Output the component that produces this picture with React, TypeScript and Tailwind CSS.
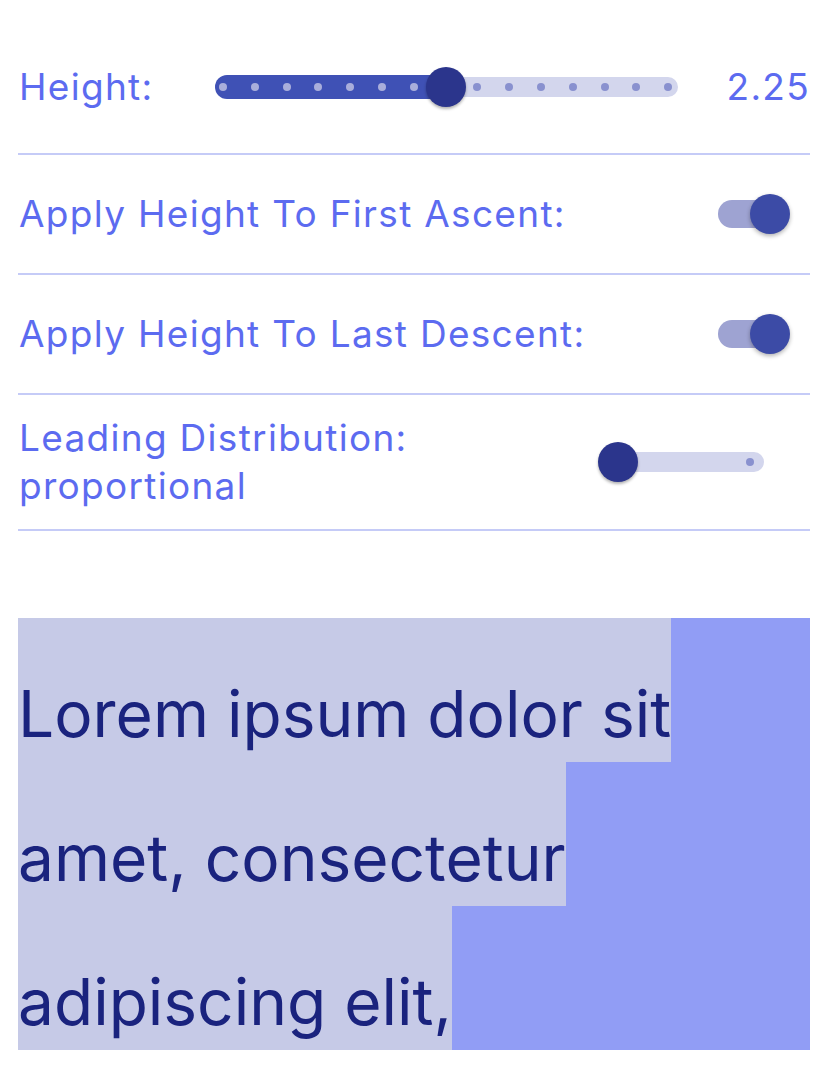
import React from "react";

const font = { fontFamily: "Inter, 'Liberation Sans', sans-serif" };

function DotSlider() {
  const dots = Array.from({ length: 15 }, (_, i) => i);
  const start = 8;
  const step = 31.8;
  const thumbIdx = 7;
  return (
    <div className="relative h-[40px] w-[463px]">
      <div className="absolute left-0 top-[8px] h-[24px] w-[240px] rounded-full bg-[#3f51b5]" />
      <div className="absolute right-0 top-[10px] h-[20px] w-[240px] rounded-full bg-[#d3d6ed]" />
      {dots.map((i) => (
        <div
          key={i}
          className={`absolute top-[16px] h-[8px] w-[8px] rounded-full ${i < thumbIdx ? "bg-[#a9aedb]" : "bg-[#8991cf]"}`}
          style={{ left: start + i * step - 4 }}
        />
      ))}
      <div
        className="absolute top-0 h-[40px] w-[40px] rounded-full bg-[#2b358c] shadow-[0_2px_3px_rgba(0,0,0,0.3)]"
        style={{ left: start + thumbIdx * step - 20 }}
      />
    </div>
  );
}

function Toggle() {
  return (
    <div className="relative h-[40px] w-[72px]">
      <div className="absolute left-0 top-[6px] h-[28px] w-[66px] rounded-full bg-[#9ea3d2]" />
      <div className="absolute right-0 top-0 h-[40px] w-[40px] rounded-full bg-[#3c4ba6] shadow-[0_2px_4px_rgba(0,0,0,0.3)]" />
    </div>
  );
}

function SmallSlider() {
  return (
    <div className="relative h-[40px] w-[166px]">
      <div className="absolute left-[2px] right-0 top-[10px] h-[20px] rounded-full bg-[#d3d6ed]" />
      <div className="absolute right-[10px] top-[16px] h-[8px] w-[8px] rounded-full bg-[#8991cf]" />
      <div className="absolute left-0 top-0 h-[40px] w-[40px] rounded-full bg-[#2b358c] shadow-[0_2px_3px_rgba(0,0,0,0.3)]" />
    </div>
  );
}

export default function App() {
  const lines = ["Lorem ipsum dolor sit", "amet, consectetur", "adipiscing elit,"];
  const label = "text-[37px] tracking-[1.3px] text-[#5c6bf0]";
  return (
    <div className="min-h-[1072px] w-[830px] bg-white pl-[18px] pt-[20px]" style={font}>
      <div className="w-[792px]">
        <div className={`flex h-[135px] items-center border-b-2 border-[#c5cbf7] ${label}`}>
          <span className="w-[197px] pl-[1px]">Height:</span>
          <DotSlider />
          <span className="flex-1 text-right">2.25</span>
        </div>
        <div className={`flex h-[120px] items-center justify-between border-b-2 border-[#c5cbf7] pl-[1px] ${label}`}>
          <span>Apply Height To First Ascent:</span>
          <div className="mr-[20px]">
            <Toggle />
          </div>
        </div>
        <div className={`flex h-[120px] items-center justify-between border-b-2 border-[#c5cbf7] pl-[1px] ${label}`}>
          <span>Apply Height To Last Descent:</span>
          <div className="mr-[20px]">
            <Toggle />
          </div>
        </div>
        <div className={`flex h-[136px] items-center justify-between border-b-2 border-[#c5cbf7] pl-[1px] leading-[48px] ${label}`}>
          <div className="flex flex-col">
            <span>Leading Distribution:</span>
            <span>proportional</span>
          </div>
          <div className="mr-[46px]">
            <SmallSlider />
          </div>
        </div>
        <div className="mt-[87px] flex flex-col bg-[#919df5]">
          {lines.map((l) => (
            <div key={l} className="flex h-[144px] w-fit items-end bg-[#c6cae7] pb-[16px]">
              <span className="text-[64px] leading-none text-[#1a237e]">{l}</span>
            </div>
          ))}
        </div>
      </div>
    </div>
  );
}
